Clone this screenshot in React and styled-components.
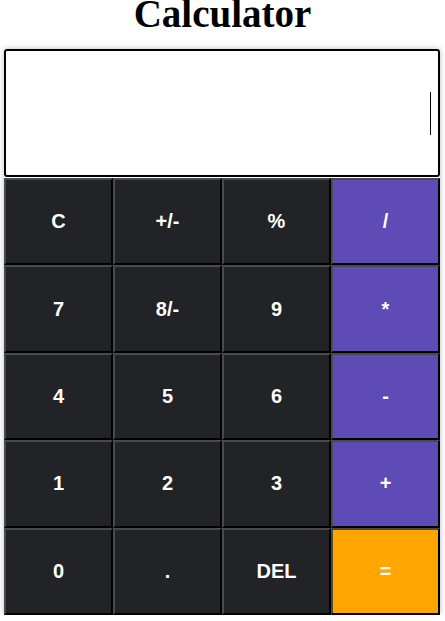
import React from 'react'
import styled, { createGlobalStyle } from 'styled-components'

const GlobalStyle = createGlobalStyle`
    body {
        margin: 0;
        background: #ffffff;
    }
`

const keys = [
    { label: 'C' },
    { label: '+/-' },
    { label: '%' },
    { label: '/', kind: 'operator' },
    { label: '7' },
    { label: '8/-' },
    { label: '9' },
    { label: '*', kind: 'operator' },
    { label: '4' },
    { label: '5' },
    { label: '6' },
    { label: '-', kind: 'operator' },
    { label: '1' },
    { label: '2' },
    { label: '3' },
    { label: '+', kind: 'operator' },
    { label: '0' },
    { label: '.' },
    { label: 'DEL' },
    { label: '=', kind: 'equals' },
]

const keyColors = {
    number: '#212326',
    operator: '#5e4bb5',
    equals: '#ffa500',
}

const App = () => {
    return (
        <>
            <GlobalStyle />
            <Title>Calculator</Title>
            <Calculator>
                <Display>
                    <Caret />
                </Display>
                <Keypad>
                    {keys.map((key, i) => (
                        <Key key={i} kind={key.kind || 'number'}>
                            {key.label}
                        </Key>
                    ))}
                </Keypad>
            </Calculator>
        </>
    )
}

const Title = styled.h1`
    margin: 0 0 21px;
    font-family: "Liberation Serif", "Times New Roman", serif;
    font-size: 39px;
    line-height: 28px;
    font-weight: bold;
    text-align: center;
    color: #000;
`

const Calculator = styled.div`
    width: 436px;
    margin: 0 4px;
    background: #fff;
    box-shadow: 0 0 6px rgba(0, 0, 0, 0.25);
`

const Display = styled.div`
    box-sizing: border-box;
    height: 128px;
    border: 2px solid #000;
    border-radius: 3px;
    display: flex;
    align-items: center;
    justify-content: flex-end;
    padding: 0 7px 0 0;
    margin-bottom: 1px;
`

const Caret = styled.span`
    display: block;
    width: 1px;
    height: 43px;
    margin-top: 1px;
    background: #000;
`

const Keypad = styled.div`
    display: grid;
    grid-template-columns: repeat(4, 1fr);
    grid-auto-rows: 87.4px;
`

const Key = styled.button`
    box-sizing: border-box;
    margin: 0;
    padding: 0;
    border-style: solid;
    border-width: 2px;
    border-color: #4a4a4a #000 #000 #4a4a4a;
    background: ${props => keyColors[props.kind]};
    color: #fff;
    font-family: "Liberation Sans", Arial, sans-serif;
    font-size: 20px;
    font-weight: bold;
    cursor: pointer;
`

export default App
